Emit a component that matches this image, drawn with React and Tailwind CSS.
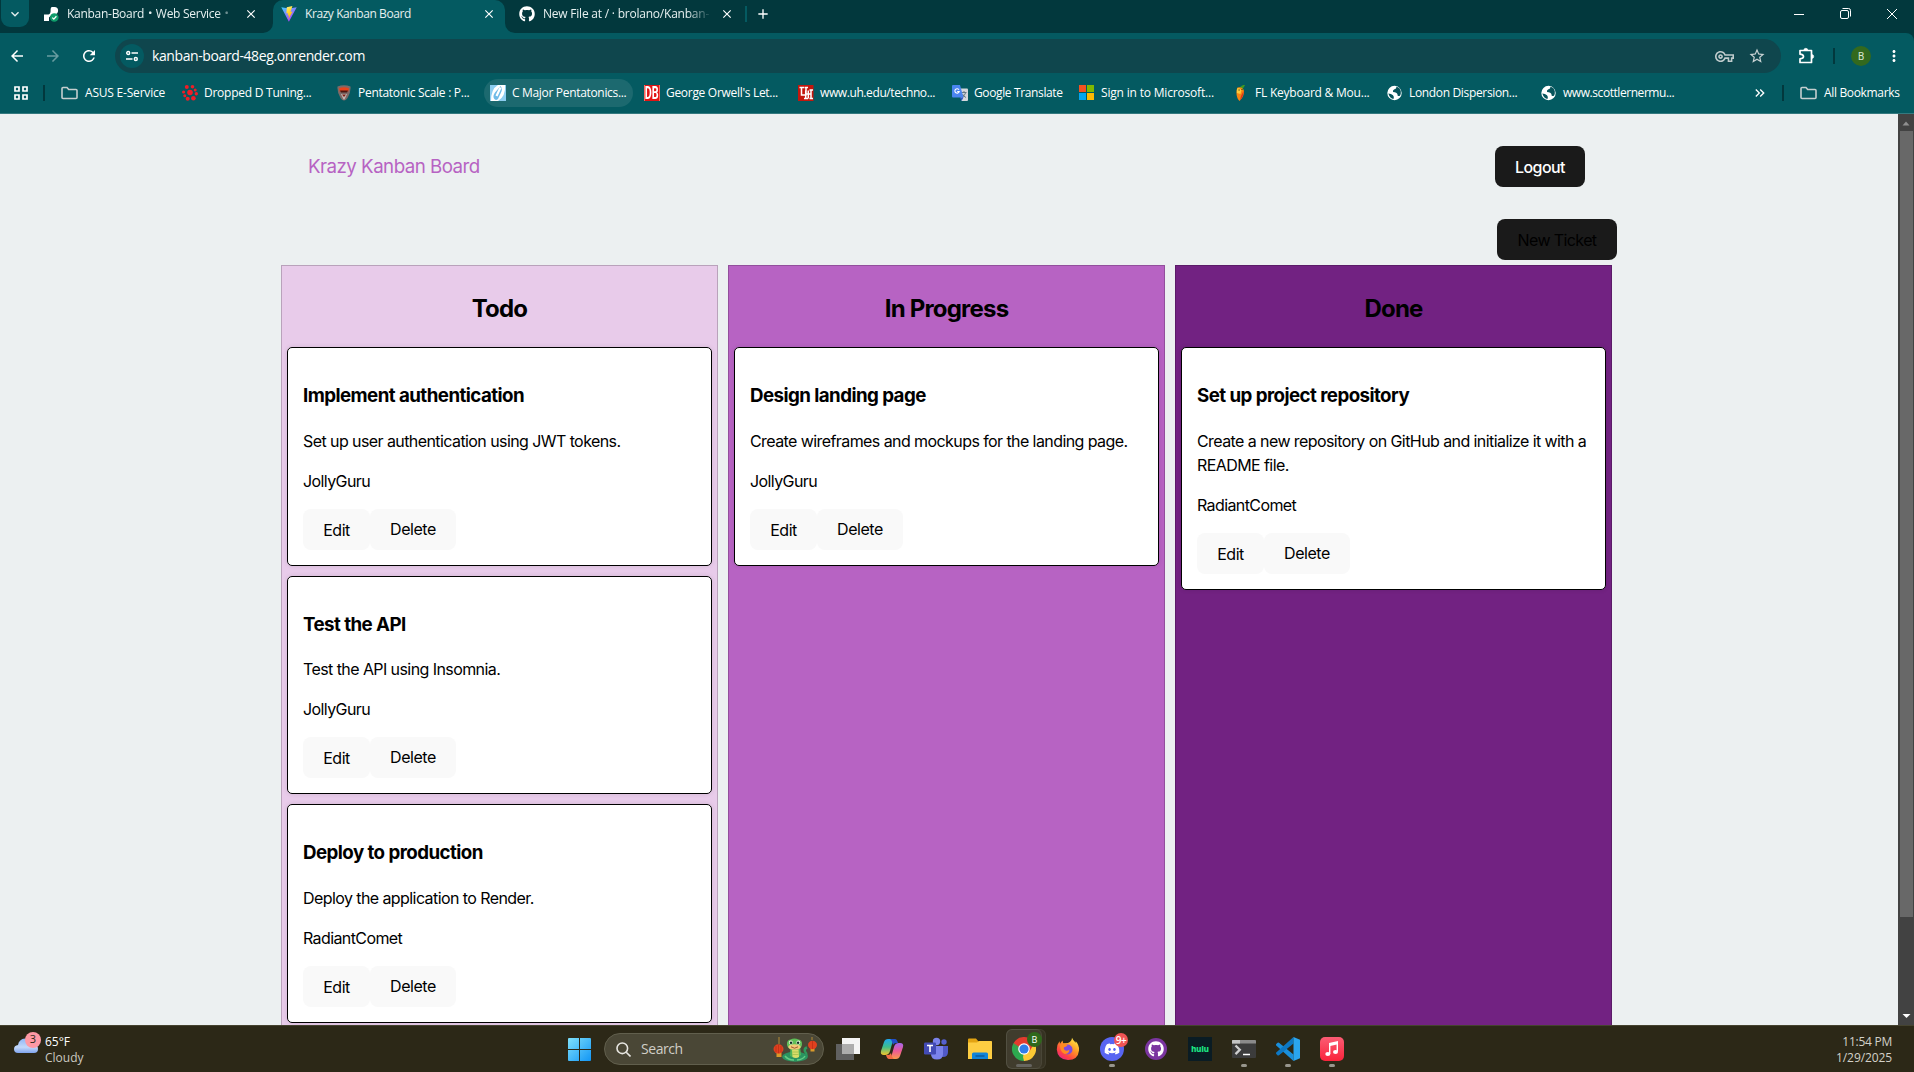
import React from 'react';
import { MdArrowBack, MdArrowForward, MdRefresh, MdStarBorder, MdOutlineVpnKey, MdKeyboardArrowDown, MdClose, MdAdd, MdMoreVert, MdKeyboardDoubleArrowRight } from 'react-icons/md';
import { FaGithub, FaDiscord } from 'react-icons/fa';

/* ---------- favicons ---------- */

const RenderIcon = () => (
  <svg viewBox="0 0 16 16" className="size-4 shrink-0">
    <path d="M9 1h2.500a3.600 3.600 0 0 1 0 7.200H9.200L6 11.400V15H1V8.500h4.500C7.300 8 7.600 6.500 7.600 4.500 7.600 2.500 8 1 9 1z" fill="#fff" />
    <circle cx="11.300" cy="11.500" r="4.300" fill="#0f9d6b" />
    <path d="m9.300 11.600 1.500 1.500 2.600-2.900" fill="none" stroke="#fff" strokeWidth="1.300" />
  </svg>
);

const ViteIcon = () => (
  <svg viewBox="0 0 16 16" className="size-4 shrink-0">
    <defs>
      <linearGradient id="vite-a" x1="0" y1="0" x2="0.700" y2="1">
        <stop stopColor="#41d1ff" />
        <stop offset="1" stopColor="#bd34fe" />
      </linearGradient>
      <linearGradient id="vite-b" x1="0.300" y1="0" x2="0.600" y2="1">
        <stop stopColor="#ffea83" />
        <stop offset="0.300" stopColor="#ffdd35" />
        <stop offset="1" stopColor="#ffa800" />
      </linearGradient>
    </defs>
    <path d="M.3 1.200 7.900 15.800 15.700 1.200 8 2.600z" fill="url(#vite-a)" />
    <path d="M11.400.1 5.800 1.200 5.400 7.500l1.700-.3-.5 2.600 1.500-.5-.8 4.200 4.300-8-2.100.4z" fill="url(#vite-b)" />
  </svg>
);

const ClusterIcon = () => (
  <svg viewBox="0 0 16 16" className="size-4" fill="#f01d26">
    <circle cx="8" cy="7.500" r="2.800" />
    <circle cx="4.800" cy="2" r="2" />
    <circle cx="10.500" cy="1.800" r="1.800" />
    <circle cx="13.200" cy="5" r="1.500" />
    <circle cx="14.300" cy="8.700" r="1.700" />
    <circle cx="11.400" cy="13.200" r="2.300" />
    <circle cx="5.700" cy="13.800" r="2" />
    <circle cx="2.800" cy="10.800" r="1.500" />
    <circle cx="1.600" cy="7" r="1.600" />
  </svg>
);

const PickIcon = () => (
  <svg viewBox="0 0 16 16" className="size-4">
    <path d="M1.500 1.500Q8-1 14.500 1.500 15 7 11.500 13 8 18 4.500 13 1 7 1.500 1.500z" fill="#7d6a68" />
    <path d="M3 3.300Q8 1 13 3.300L12.300 6.500H3.700z" fill="#e8431c" />
    <path d="M4 5.500h8l-1 2H5z" fill="#4b1712" />
    <path d="M5 9h6l-2.500 5.500h-1z" fill="#c2b5b2" />
    <path d="M6 9.500h4l-2 2.500z" fill="#7a1b12" />
  </svg>
);

const GuitarIcon = () => (
  <svg viewBox="0 0 16 16" className="size-4">
    <path d="M0 0h16v16H0z" fill="#fff" />
    <path d="M0 0h8Q1 4 1 16H0zM16 0v16H8Q16 11 15 0z" fill="#8ccdf0" />
    <path d="M10.500 1Q13 4 11 7.500L8 14Q5.500 16 4 13.500 2.500 11 5 7.500z" fill="#6fbbe8" />
    <path d="M10.500 2.500 6.500 11" stroke="#fff" strokeWidth="2.200" />
  </svg>
);

const DbIcon = () => (
  <span className="flex size-4 items-center justify-center border-x border-[#ff6a60] bg-[#e11414] font-['Roboto'] text-[15px] leading-none font-bold text-white">
    <span className="scale-x-[0.72] scale-y-125">DB</span>
  </span>
);

const UhIcon = () => (
  <svg viewBox="0 0 16 16" className="size-4">
    <path d="M0 0h15.500v16H0z" fill="#c4160c" />
    <path d="M1.500 2.500H6M3.500 2.500V10h4.500V2.500M6.500 2.500H10M6 13.500h4M11.500 13.500H15M7.700 5.500v8M13 5v8.500M11.500 5H15M7.700 9H13M10.300 5.500v8" fill="none" stroke="#fff" strokeWidth="1.500" />
  </svg>
);

const TranslateIcon = () => (
  <svg viewBox="0 0 16 16" className="size-4">
    <path d="M6.500 3.500H15a1 1 0 0 1 1 1V15a1 1 0 0 1-1 1H9.500z" fill="#d5d8dc" />
    <path d="M9.500 7.500h5M12 6v1.500M13.500 8q-1 3-3.500 4.500M10.500 9q1 2.500 3.500 3.500" fill="none" stroke="#667985" strokeWidth="1" />
    <path d="M1 0h7l3.500 12.500H1a1 1 0 0 1-1-1V1a1 1 0 0 1 1-1z" fill="#4a85f0" />
    <path d="M7 4.800A2.200 2.200 0 1 0 7.200 6.500H5.200" fill="none" stroke="#fff" strokeWidth="1.100" />
    <path d="M8 12.500h3.500L9.500 16z" fill="#2b55c5" />
  </svg>
);

const MicrosoftIcon = () => (
  <svg viewBox="0 0 16 16" className="size-4">
    <path d="M0 0h7v7H0z" fill="#f55120" />
    <path d="M8 0h7v7H8z" fill="#80b900" />
    <path d="M0 8h7v7H0z" fill="#03a5f0" />
    <path d="M8 8h7v7H8z" fill="#ffb902" />
  </svg>
);

const FruitIcon = () => (
  <svg viewBox="0 0 16 16" className="size-4">
    <path d="M6 4Q8-.5 12 0L9.500 4.500z" fill="#3f9a24" />
    <path d="M4.500 2.500q4-1 6 2Q12 8 9 13L6.500 16Q4 14 3.500 9 3 5 4.500 2.500z" fill="#f78410" />
    <path d="M4.500 3q3 0 4 2l-1 4-3.700-1Q3.500 5 4.500 3z" fill="#ffc838" />
    <path d="M7 15.500Q11 11 10.500 6L8 11z" fill="#e0361a" />
    <path d="M5.500 5h1.200M8.500 4.500h1" stroke="#2b3a12" strokeWidth="1.200" />
  </svg>
);

const GlobeIcon = () => (
  <svg viewBox="0 0 16 16" className="size-4">
    <circle cx="7.500" cy="8" r="7.200" fill="#fff" />
    <path d="M9.500 1.500Q9.500 4 7.500 4.200 5.500 5 6 7q4 0 4.500 2.500-.3 2 2 1.500 1-.5 1.300-2.500.3-3-1.300-5.200zM1.300 8.500q3 0 4.700 1.700 1.500 1.500.5 3.800Q3 13.500 1.300 8.500z" fill="#07545b" />
  </svg>
);

const FolderIcon = () => (
  <svg viewBox="0 0 17 14" className="h-[14px] w-[17px] shrink-0" fill="none" stroke="#c5cfcf" strokeWidth="1.600">
    <path d="M1 2.500Q1 1.500 2 1.500H6l1.700 2H15q1 0 1 1V11.500q0 1-1 1H2q-1 0-1-1z" />
  </svg>
);

const PuzzleIcon = () => (
  <svg viewBox="0 0 18 18" className="size-[18px]" fill="none" stroke="#fff" strokeWidth="1.700">
    <path d="M2 3.500H13.500V15.500H2V11.800Q5.500 11.500 5.500 9.500 5.500 7.500 2 7.200z" strokeLinejoin="round" />
    <path d="M5.800 3.300a2 2 0 0 1 4 0zM13.700 7.500a2 2 0 0 1 0 4z" fill="#fff" strokeWidth=".6" />
  </svg>
);

/* ---------- browser chrome ---------- */

const bookmarks = [
  { icon: ClusterIcon, label: 'Dropped D Tuning...', w: 'w-[154px]', track: 'tracking-[-0.25px]' },
  { icon: PickIcon, label: 'Pentatonic Scale : P...', w: 'w-[154px]', track: 'tracking-[-0.28px]' },
  { icon: GuitarIcon, label: 'C Major Pentatonics...', w: 'w-[154px]', track: 'tracking-[-0.32px]', active: true },
  { icon: DbIcon, label: "George Orwell's Let...", w: 'w-[154px]', track: 'tracking-[-0.3px]' },
  { icon: UhIcon, label: 'www.uh.edu/techno...', w: 'w-[154px]', track: 'tracking-[-0.4px]' },
  { icon: TranslateIcon, label: 'Google Translate', w: 'w-[127px]', track: 'tracking-[-0.37px]' },
  { icon: MicrosoftIcon, label: 'Sign in to Microsoft...', w: 'w-[154px]', track: 'tracking-[-0.18px]' },
  { icon: FruitIcon, label: 'FL Keyboard & Mou...', w: 'w-[154px]', track: 'tracking-[-0.22px]' },
  { icon: GlobeIcon, label: 'London Dispersion...', w: 'w-[154px]', track: 'tracking-[-0.34px]' },
  { icon: GlobeIcon, label: 'www.scottlernermu...', w: 'w-[154px]', track: 'tracking-[-0.44px]' },
];

function TabStrip() {
  return (
    <div className="flex h-[33px] bg-[#045a61] text-xs text-[#e6f0f0]">
      <div className="flex w-[273px] rounded-br-[10px] bg-[#02383d]">
        <div className="ml-px flex h-[27px] w-7 justify-center rounded-b-[9px] bg-[#045a61] pt-1.5">
          <MdKeyboardArrowDown className="size-4" />
        </div>
        <div className="flex h-[27px] flex-1 items-center pl-3.5">
          <RenderIcon />
          <span className="ml-2 w-[171px] whitespace-nowrap tracking-[-0.28px] [mask-image:linear-gradient(to_right,black_88%,transparent_98%)]">Kanban-Board・Web Service・</span>
          <MdClose className="ml-1.5 size-3.5 text-white" />
        </div>
      </div>
      <div className="w-[232px] bg-[linear-gradient(#02383d_50%,#045a61_50%)]">
        <div className="flex h-full items-start rounded-t-[10px] bg-[#045a61] pl-2">
          <div className="flex h-[27px] w-full items-center">
            <ViteIcon />
            <span className="ml-2 w-[171px] tracking-[-0.42px]">Krazy Kanban Board</span>
            <MdClose className="ml-1.5 size-3.5 text-white" />
          </div>
        </div>
      </div>
      <div className="flex flex-1 items-start rounded-bl-[10px] bg-[#02383d] pl-3.5">
        <div className="flex h-[27px] w-full items-center">
          <FaGithub className="size-4 shrink-0 text-white" />
          <span className="ml-2 w-[169px] whitespace-nowrap tracking-[-0.22px] [mask-image:linear-gradient(to_right,black_85%,transparent)]">New File at / · brolano/Kanban-</span>
          <MdClose className="ml-2 size-3.5 text-white" />
          <div className="ml-[11px] h-4 w-0.5 bg-[#045a61]" />
          <MdAdd className="ml-2 size-4 text-white" />
          <div className="mr-[17px] ml-auto flex items-center gap-9">
            <svg viewBox="0 0 10 10" className="size-2.5" stroke="#fff"><path d="M0 5.500h10" /></svg>
            <svg viewBox="0 0 11 11" className="size-[11px]" fill="none" stroke="#fff"><rect x=".5" y="2.500" width="8" height="8" rx="1.500" /><path d="M2.500.500h6a2 2 0 0 1 2 2v6" /></svg>
            <svg viewBox="0 0 10 10" className="size-2.5" stroke="#fff"><path d="M0 0 10 10M10 0 0 10" /></svg>
          </div>
        </div>
      </div>
    </div>
  );
}

function AddressRow() {
  return (
    <div className="flex h-[46px] items-center text-white">
      <MdArrowBack className="ml-2 size-[18px]" />
      <MdArrowForward className="ml-[18px] size-[18px] opacity-40" />
      <MdRefresh className="ml-[18px] size-[18px]" />
      <div className="ml-[17px] flex h-[34px] w-[1666px] items-center rounded-full bg-[#0f464d] pl-[5px]">
        <div className="flex size-6 items-center justify-center rounded-full bg-[#045a61]">
          <svg viewBox="0 0 12 12" className="size-3" fill="none" stroke="#fff" strokeWidth="1.400">
            <circle cx="2.200" cy="3" r="1.500" /><path d="M5.500 3H12M0 9h6.500" /><circle cx="9.800" cy="9" r="1.500" />
          </svg>
        </div>
        <span className="ml-2 text-sm tracking-[-0.4px]">kanban-board-48eg.onrender.com</span>
        <MdOutlineVpnKey className="ml-auto size-[19px] text-[#bfcbcc]" />
        <MdStarBorder className="mr-[15px] ml-3.5 size-[18px] text-[#c8d2d3]" />
      </div>
      <div className="ml-[17px]"><PuzzleIcon /></div>
      <div className="ml-[17px] h-4 w-0.5 bg-[#02383d]" />
      <div className="ml-4 flex size-5 items-center justify-center rounded-full bg-[#33691e] font-['Roboto'] text-[10px] text-[#d9e5d3]">B</div>
      <MdMoreVert className="ml-3.5 size-[18px]" />
    </div>
  );
}

function BookmarkBar() {
  return (
    <div className="flex h-7 items-center text-xs text-white">
      <svg viewBox="0 0 14 14" className="ml-3.5 size-3.5" fill="none" stroke="#fff" strokeWidth="1.700">
        <path d="M1 1h4v4H1zM9 1h4v4H9zM1 9h4v4H1zM9 9h4v4H9z" />
      </svg>
      <div className="ml-[15px] h-4 w-0.5 bg-[#02383d]" />
      <div className="ml-4 flex w-[115px] items-center">
        <FolderIcon />
        <span className="ml-[7px] tracking-[-0.2px]">ASUS E-Service</span>
      </div>
      {bookmarks.map(({ icon: Icon, label, w, track, active }) => (
        <div key={label} className={'flex shrink-0 ' + w}>
          <div className={'flex h-7 w-[149px] shrink-0 items-center rounded-full pl-1.5 whitespace-nowrap ' + (active ? 'bg-[#1c696f]' : '')}>
            <Icon />
            <span className={'ml-1.5 ' + track}>{label}</span>
          </div>
        </div>
      ))}
      <MdKeyboardDoubleArrowRight className="ml-[63px] size-4" />
      <div className="ml-3.5 h-4 w-0.5 bg-[#02383d]" />
      <div className="ml-4 flex items-center">
        <FolderIcon />
        <span className="ml-[7px] tracking-[-0.34px] whitespace-nowrap">All Bookmarks</span>
      </div>
    </div>
  );
}

/* ---------- kanban page ---------- */

const columns = [
  {
    title: 'Todo', bg: 'bg-[#e8cbea]',
    tickets: [
      { name: 'Implement authentication', text: 'Set up user authentication using JWT tokens.', user: 'JollyGuru' },
      { name: 'Test the API', text: 'Test the API using Insomnia.', user: 'JollyGuru' },
      { name: 'Deploy to production', text: 'Deploy the application to Render.', user: 'RadiantComet' },
    ],
  },
  {
    title: 'In Progress', bg: 'bg-[#b763c3]',
    tickets: [{ name: 'Design landing page', text: 'Create wireframes and mockups for the landing page.', user: 'JollyGuru' }],
  },
  {
    title: 'Done', bg: 'bg-[#722282]',
    tickets: [{ name: 'Set up project repository', text: 'Create a new repository on GitHub and initialize it with a README file.', user: 'RadiantComet' }],
  },
];

function Ticket({ name, text, user }) {
  return (
    <article className="mb-2.5 rounded-[5px] border border-black bg-white p-[15px] shadow-[0_0_5px_rgba(0,0,0,0.1)]">
      <h3 className="my-[18.7px] text-[18.72px] leading-[28.1px] font-bold tracking-[-0.55px]">{name}</h3>
      <p className="mb-4 tracking-[-0.58px]">{text}</p>
      <p className="mb-4 tracking-[-0.6px]">{user}</p>
      <div className="flex tracking-[-0.45px]">
        <a className="h-[41px] w-[67px] rounded-lg bg-[#f9f9f9] pt-[9px] text-center">Edit</a>
        <button className="h-[41px] w-[86px] rounded-lg bg-[#f9f9f9] pb-px text-center">Delete</button>
      </div>
    </article>
  );
}

function Page() {
  return (
    <main className="h-[911px] flex-1 overflow-hidden bg-[#ecf0f1] font-['Inter',sans-serif] text-base text-black">
      <div className="flex items-start justify-between pt-8 pr-[313px] pl-[308px]">
        <h1 className="pt-[7px] text-[18.72px] leading-7 tracking-[-0.52px] text-[#b763c3]">Krazy Kanban Board</h1>
        <button className="h-[41px] w-[90px] rounded-lg bg-[#1a1a1a] font-medium tracking-[-0.6px] text-white">Logout</button>
      </div>
      <div className="mt-8 flex justify-end pr-[281px]">
        <button className="h-[41px] w-[120px] rounded-lg bg-[#1a1a1a] tracking-[-0.6px] text-black">New Ticket</button>
      </div>
      <div className="mt-[5px] ml-[281px] flex h-[900px] gap-2.5">
        {columns.map((c) => (
          <section key={c.title} className={'w-[437px] border border-black/20 p-[5px] ' + c.bg}>
            <h2 className="mt-[19.9px] mb-[20.5px] text-center text-2xl leading-9 font-bold tracking-[-0.8px]">{c.title}</h2>
            {c.tickets.map((t) => <Ticket key={t.name} {...t} />)}
          </section>
        ))}
      </div>
    </main>
  );
}

function Scrollbar() {
  return (
    <div className="flex h-[911px] w-4 flex-col items-center bg-[#424242]">
      <svg viewBox="0 0 16 17" className="h-[17px] w-4" fill="#8f8f8f"><path d="M4.500 11.500 8 7.500l3.500 4z" /></svg>
      <div className="h-[786px] w-[13px] bg-[#686868]" />
      <svg viewBox="0 0 16 17" className="mt-auto h-[17px] w-4" fill="#fff"><path d="M4.500 6h8l-4 4z" /></svg>
    </div>
  );
}

/* ---------- taskbar ---------- */

const WindowsIcon = () => (
  <svg viewBox="0 0 23 23" className="size-[23px]">
    <defs><linearGradient id="win" x1="0" y1="0" x2="1" y2="1"><stop stopColor="#7fe0fb" /><stop offset="1" stopColor="#1296f5" /></linearGradient></defs>
    <path d="M0 1q0-1 1-1h10v11H0zM12 0h10q1 0 1 1v10H12zM0 12h11v11H1q-1 0-1-1zM12 12h11v10q0 1-1 1H12z" fill="url(#win)" />
  </svg>
);

const SnakeArt = () => (
  <svg viewBox="0 0 44 25" className="h-[25px] w-11">
    <path d="M6 0v7M39 0v3" stroke="#b38a35" strokeWidth="1" />
    <path d="M3.500 16h5v4h-5zM37.500 11h4v3.500h-4z" fill="#d99a2b" />
    <ellipse cx="5.500" cy="12" rx="5" ry="4.700" fill="#e0401f" />
    <ellipse cx="39.500" cy="8" rx="4.500" ry="4.200" fill="#e0401f" />
    <path d="M5.500 8v8M3 9v6M8 9v6M39.500 4v8" stroke="#b12a13" strokeWidth=".6" fill="none" />
    <path d="M30 22q6-3 2-7.500-1-3 2-4" fill="none" stroke="#2f9a5c" strokeWidth="2.500" />
    <ellipse cx="22" cy="19.800" rx="12.800" ry="5" fill="#2a9460" />
    <path d="M12 19q3 4 9 4M24 23q6-.5 8-4" fill="none" stroke="#64cc84" strokeWidth="1.500" />
    <path d="M17.500 9h9.500l1 9q-5 5-11 1z" fill="#4fb45a" />
    <path d="M19 12h6.500l.5 8q-3 2-6.500 0z" fill="#d8dd68" />
    <path d="M19.500 15h6M19.500 17.500h6" stroke="#8fb744" strokeWidth=".6" />
    <path d="M14 8q-.5-5 3.500-5.500Q21.500.5 25.500 2.500q4 .5 3.500 5.500-1 5-7.500 5T14 8z" fill="#5fbe58" />
    <ellipse cx="21.500" cy="10" rx="6.200" ry="2.700" fill="#efcb78" />
    <circle cx="17.800" cy="5.500" r="1.900" fill="#f6ffe9" /><circle cx="25.300" cy="5.500" r="1.900" fill="#f6ffe9" />
    <circle cx="18" cy="5.800" r="1.300" fill="#16302a" /><circle cx="25.100" cy="5.800" r="1.300" fill="#16302a" />
    <path d="M18 9.800q3.500 2.800 7 0" fill="none" stroke="#99492c" strokeWidth=".9" />
  </svg>
);

const TaskViewIcon = () => (
  <svg viewBox="0 0 24 24" className="size-6">
    <path d="M6 1h18v16H6z" fill="#f4f4f4" />
    <path d="M0 7h18v16H0z" fill="#606060" />
    <path d="M6 7h12v10H6z" fill="#adadad" />
  </svg>
);

const CopilotIcon = () => (
  <svg viewBox="0 0 24 24" className="size-6">
    <defs>
      <linearGradient id="cop-a" x1="0" y1="0" x2="0" y2="1"><stop stopColor="#1ea7ee" /><stop offset=".5" stopColor="#3fbf8a" /><stop offset="1" stopColor="#f2c52c" /></linearGradient>
      <linearGradient id="cop-b" x1="0" y1="0" x2="0" y2="1"><stop stopColor="#a467ee" /><stop offset=".5" stopColor="#ee5a96" /><stop offset="1" stopColor="#fb9b4b" /></linearGradient>
    </defs>
    <path d="M8 2h7q-2 1-3 5l-2 7q-1 4-5 4H4q-4 0-3-4L4 5Q5 2 8 2z" fill="url(#cop-a)" />
    <path d="M10 2h5q2 0 3 4h-2q-2 0-3 2-1-5-3-6z" fill="#2250c9" />
    <path d="M16 22H9q2-1 3-5l2-7q1-4 5-4h1q4 0 3 4l-3 9q-1 3-4 3z" fill="url(#cop-b)" />
    <path d="M14 22H9q-2 0-3-4h2q2 0 3-2 1 5 3 6z" fill="#f26b45" />
  </svg>
);

const TeamsIcon = () => (
  <svg viewBox="0 0 24 24" className="size-6">
    <circle cx="20" cy="5" r="2.700" fill="#5560cf" /><circle cx="12.500" cy="4.500" r="3.700" fill="#7b83eb" />
    <path d="M15 9h9v6q0 5-5 5h-4z" fill="#5059c9" />
    <path d="M7 9h12v8q0 5.500-6 5.500T7 17z" fill="#7b83eb" />
    <rect y="5.500" width="12" height="12" rx="1.200" fill="#434bb5" />
    <path d="M3 8.500h6M6 8.500v6.500" stroke="#fff" strokeWidth="1.600" />
  </svg>
);

const ExplorerIcon = () => (
  <svg viewBox="0 0 24 24" className="size-6">
    <path d="M0 2.500q0-1 1-1h7l2.500 3H24V10H0z" fill="#e2a312" />
    <path d="M0 5.500h9l2-1.500h12q1 0 1 1v17H0z" fill="#fdcd42" />
    <path d="M4 22v-5q0-1.500 1.500-1.500h13q1.500 0 1.500 1.500v5z" fill="#1284d8" />
    <path d="M7.500 19h9" stroke="#0c5b9f" strokeWidth="1.500" />
  </svg>
);

const ChromeIcon = () => (
  <svg viewBox="0 0 24 24" className="size-6">
    <path d="M12 12 1.600 6A12 12 0 0 1 22.400 6z" fill="#e33b2e" />
    <path d="M12 12 22.400 6A12 12 0 0 1 12 24z" fill="#fcc934" />
    <path d="M12 12 12 24A12 12 0 0 1 1.600 6z" fill="#2da94f" />
    <path d="M12 6h10.400L17.200 15zM6.800 15 1.600 6l10.400 0z" fill="#e33b2e" />
    <path d="M1.600 6 6.800 15 12 17.500 10 12z" fill="#2da94f" />
    <path d="M17.200 15 12 24l-1-4 1-5 5-3z" fill="#fcc934" />
    <circle cx="12" cy="12" r="5.800" fill="#fff" /><circle cx="12" cy="12" r="4.600" fill="#2f7de9" />
  </svg>
);

const FirefoxIcon = () => (
  <svg viewBox="0 0 24 24" className="size-6">
    <defs><linearGradient id="ff" x1="0.900" y1="0.050" x2="0.200" y2="1"><stop stopColor="#fff04a" /><stop offset=".4" stopColor="#ff9a26" /><stop offset=".75" stopColor="#ff4442" /><stop offset="1" stopColor="#e6208c" /></linearGradient></defs>
    <path d="M16 .8q1 2.500 3.700 5Q20 5 19.500 4q4 4 3.500 9.500Q22 23 12 23 1.500 22.500.8 12.500.8 7.500 3.500 4.300L4 6.800 6.500 3.500 7.200 6.200 12 6Q16 4 16 .8z" fill="url(#ff)" />
    <circle cx="11.500" cy="12.500" r="5" fill="#7a4be0" />
    <path d="M4 8q4-2.500 7.500.3-1 1.700-3.300 2Q7 12 9.500 13.500q3 .5 4-1-.5 4.500-4.700 4.500Q4 15 4 8z" fill="#ff8a22" />
  </svg>
);

const TerminalIcon = () => (
  <svg viewBox="0 0 24 24" className="size-6">
    <rect y="3" width="24" height="18" rx="1" fill="#3c3c3c" />
    <path d="M0 4q0-1 1-1h22q1 0 1 1v2.500H0z" fill="#8b8b8b" />
    <path d="M0 4q0-1 1-1h7v3.500H0z" fill="#c4c4c4" />
    <path d="m3.500 8.500 4.300 4.300-4.300 4.300" fill="none" stroke="#cfcfcf" strokeWidth="2.300" />
    <path d="M11 17.500h7" stroke="#fff" strokeWidth="1.500" />
  </svg>
);

const CodeIcon = () => (
  <svg viewBox="0 0 24 24" className="size-6">
    <path d="M17.500 24v-6.500L3 5.700Q2 5 1.200 6L.3 7q-.7 1 .2 1.700z" fill="#1a8fdb" />
    <path d="M17.500 0v6.500L3 18.300Q2 19 1.200 18L.3 17q-.7-1 .2-1.700z" fill="#0d78c4" />
    <path d="M17.500 0 24 2.800v18.400L17.500 24z" fill="#2aa5ef" />
  </svg>
);

const MusicIcon = () => (
  <svg viewBox="0 0 24 24" className="size-6">
    <defs><linearGradient id="mus" x1="0" y1="0" x2="0" y2="1"><stop stopColor="#fb5c74" /><stop offset="1" stopColor="#fa233b" /></linearGradient></defs>
    <rect width="24" height="24" rx="5" fill="url(#mus)" />
    <path d="M9 6 18 4v3.200L9 9.200z" fill="#fff" />
    <path d="M9.700 6v11M17.300 5v9.500" stroke="#fff" strokeWidth="1.400" />
    <ellipse cx="7.800" cy="17" rx="2.500" ry="2.100" fill="#fff" /><ellipse cx="15.500" cy="15" rx="2.500" ry="2.100" fill="#fff" />
  </svg>
);

const DiscordApp = () => (
  <div className="relative flex size-6 items-center justify-center rounded-full bg-[#5865f2]">
    <FaDiscord className="size-4 text-white" />
    <span className="absolute -top-1 left-3.5 flex size-3.5 items-center justify-center rounded-full bg-[#f05454] text-[10px] leading-none font-semibold tracking-[-0.5px] text-white">9+</span>
  </div>
);

const GithubApp = () => (
  <div className="flex size-[22px] items-center justify-center rounded-full bg-[#7b35a0]">
    <FaGithub className="size-4 text-white" />
  </div>
);

const HuluApp = () => (
  <div className="flex size-6 items-center justify-center bg-[#0a1c24] font-['Inter'] text-[8px] font-extrabold text-[#1ce783]">hulu</div>
);

const apps = [
  { icon: TaskViewIcon }, { icon: CopilotIcon }, { icon: TeamsIcon }, { icon: ExplorerIcon },
  { icon: ChromeIcon, active: true }, { icon: FirefoxIcon }, { icon: DiscordApp, open: true },
  { icon: GithubApp }, { icon: HuluApp }, { icon: TerminalIcon, open: true }, { icon: CodeIcon, open: true }, { icon: MusicIcon, open: true },
];

function Taskbar() {
  return (
    <footer className="flex h-[47px] items-center border-t border-[#45432f] bg-[#2c2817] text-xs">
      <div className="relative ml-3.5 w-[554px]">
        <div className="flex items-center">
          <svg viewBox="0 0 24 16" className="mb-2 h-4 w-6">
            <defs><linearGradient id="cloud" x1="0" y1="0" x2="0" y2="1"><stop stopColor="#8fb5f5" /><stop offset=".6" stopColor="#c3d8fa" /><stop offset="1" stopColor="#7fa4ee" /></linearGradient></defs>
            <path d="M4 16Q0 16 0 12 0 8.500 4 8 5 2 11 1.500q6 0 7.500 5.500 5.500 0 5.500 5 0 4-4 4z" fill="url(#cloud)" />
          </svg>
          <div className="ml-[7px] pt-px leading-4 text-white">
            <div>65°F</div>
            <div className="text-[#cbc9c0]">Cloudy</div>
          </div>
        </div>
        <span className="absolute -top-px left-[11px] flex size-4 items-center justify-center rounded-full bg-[#ff99a4] text-[11px] text-[#2c2817]">3</span>
      </div>
      <WindowsIcon />
      <div className="mr-0.5 ml-[13px] flex h-8 w-[220px] items-center rounded-full border border-[#615f4d] bg-[#4a4736] pl-[11px]">
        <svg viewBox="0 0 15 15" className="size-[15px]" fill="none" stroke="#e8e7e2" strokeWidth="1.600">
          <circle cx="6.300" cy="6.300" r="5.300" /><path d="m10.200 10.200 4.300 4.300" />
        </svg>
        <span className="ml-2.5 text-sm tracking-[-0.45px] text-[#d0cec6]">Search</span>
        <div className="mr-1.5 ml-auto"><SnakeArt /></div>
      </div>
      {apps.map(({ icon: Icon, open, active }, i) => (
        <div key={i} className="relative flex h-10 w-11 items-center justify-center">
          {active && <div className="absolute inset-y-0 left-1 w-10 rounded-md border border-white/5 bg-white/5" />}
          {active && <div className="absolute inset-y-0 left-1 w-9 rounded-md border border-white/5 bg-white/5" />}
          <div className="relative"><Icon /></div>
          {active && <span className="absolute top-[3px] left-[25px] flex size-[15px] items-center justify-center rounded-full bg-[#2f681c] text-[9px] text-white">B</span>}
          {active && <div className="absolute bottom-0.5 h-[3px] w-4 rounded-full bg-[#666560]" />}
          {open && <div className="absolute bottom-0.5 h-[3px] w-1.5 rounded-full bg-[#98968d]" />}
        </div>
      ))}
      <div className="mr-[22px] ml-auto pt-px text-right leading-4 text-[#d3d1c9]">
        <div className="tracking-[-0.25px]">11:54 PM</div>
        <div className="tracking-[-0.1px]">1/29/2025</div>
      </div>
    </footer>
  );
}

export default function App() {
  return (
    <div className="flex h-[1072px] w-[1914px] flex-col overflow-hidden bg-[#02383d] font-['Open_Sans','Noto_Sans_CJK_JP',sans-serif]">
      <header className="h-[114px]">
        <TabStrip />
        <div className="h-[81px] rounded-tr-lg border-b border-[#34797f] bg-[#045a61]">
          <AddressRow />
          <BookmarkBar />
        </div>
      </header>
      <div className="flex">
        <Page />
        <Scrollbar />
      </div>
      <Taskbar />
    </div>
  );
}
